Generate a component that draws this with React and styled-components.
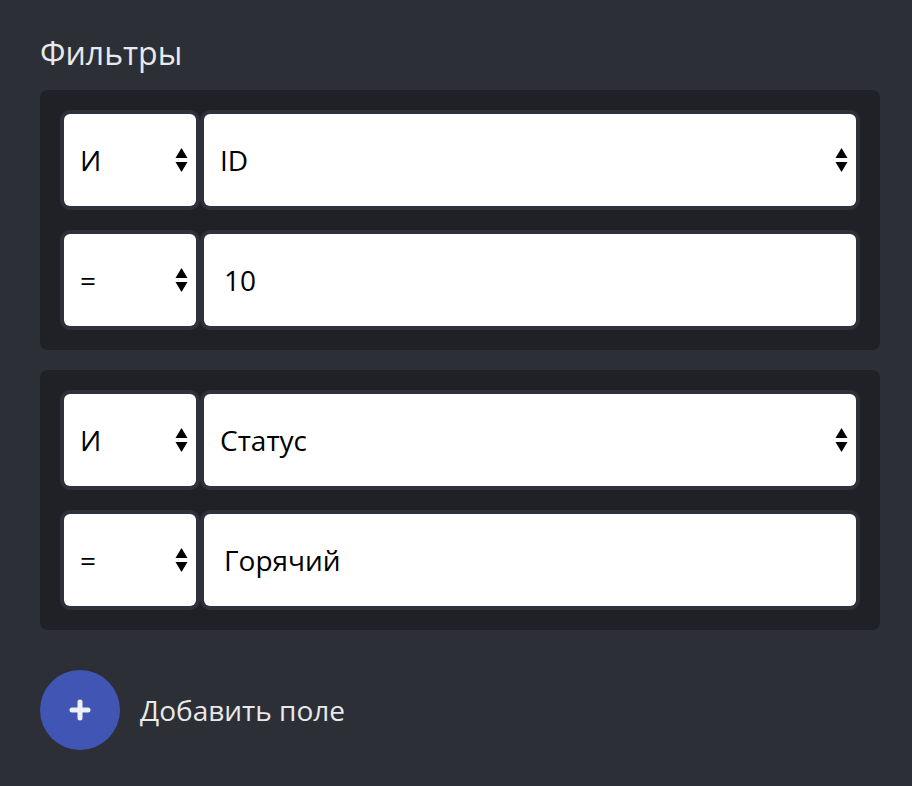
import React from "react";
import styled, { createGlobalStyle } from "styled-components";

const Global = createGlobalStyle`
  html, body { margin: 0; padding: 0; background: #2c2f36; }
  body { font-family: "Open Sans", "Noto Sans", sans-serif; }
  * { box-sizing: border-box; }
`;

const Page = styled.div`
  min-height: 786px;
  background: #2c2f36;
  padding: 31px 32px 0 40px;
  display: flex;
  flex-direction: column;
`;

const Title = styled.h2`
  margin: 0 0 15px 0;
  font-size: 32px;
  font-weight: 400;
  line-height: 44px;
  color: #e8e9eb;
`;

const Groups = styled.div`
  display: flex;
  flex-direction: column;
  gap: 20px;
`;

const Panel = styled.div`
  background: #202126;
  border-radius: 8px;
  padding: 20px;
  display: flex;
  flex-direction: column;
  gap: 20px;
`;

const Row = styled.div`
  display: grid;
  grid-template-columns: 140px 1fr;
  height: 100px;
`;

const Field = styled.div`
  position: relative;
  border: 4px solid #2e3139;
  border-radius: 10px;
  background: #2e3139;
  display: flex;
`;

const Inner = styled.div`
  flex: 1;
  background: #ffffff;
  border-radius: 6px;
  display: flex;
  align-items: center;
  padding-left: ${(p) => (p.$input ? "20px" : "16px")};
  font-size: 28px;
  color: #000;
`;

const Arrows = styled.svg`
  position: absolute;
  right: 8px;
  top: 50%;
  transform: translateY(-50%);
`;

const SelectArrows = () => (
  <Arrows width="13" height="26" viewBox="0 0 13 26">
    <polygon points="6.5,1 12.5,11 0.5,11" fill="#000" />
    <polygon points="0.5,15 12.5,15 6.5,25" fill="#000" />
  </Arrows>
);

const Select = ({ children }) => (
  <Field>
    <Inner>{children}</Inner>
    <SelectArrows />
  </Field>
);

const Input = ({ children }) => (
  <Field>
    <Inner $input>{children}</Inner>
  </Field>
);

const AddRow = styled.div`
  display: flex;
  align-items: center;
  gap: 20px;
  margin-top: 40px;
`;

const Circle = styled.button`
  width: 80px;
  height: 80px;
  border-radius: 50%;
  border: none;
  background: #4155b5;
  display: flex;
  align-items: center;
  justify-content: center;
  padding: 0;
`;

const AddLabel = styled.span`
  font-size: 28px;
  color: #e8e9eb;
`;

const groups = [
  { logic: "И", field: "ID", op: "=", value: "10" },
  { logic: "И", field: "Статус", op: "=", value: "Горячий" },
];

export default function App() {
  return (
    <>
      <Global />
      <Page>
        <Title>Фильтры</Title>
        <Groups>
          {groups.map((g, i) => (
            <Panel key={i}>
              <Row>
                <Select>{g.logic}</Select>
                <Select>{g.field}</Select>
              </Row>
              <Row>
                <Select>{g.op}</Select>
                <Input>{g.value}</Input>
              </Row>
            </Panel>
          ))}
        </Groups>
        <AddRow>
          <Circle>
            <svg width="22" height="22" viewBox="0 0 22 22">
              <path d="M11 3v16M3 11h16" stroke="#eef0f5" strokeWidth="5" strokeLinecap="round" />
            </svg>
          </Circle>
          <AddLabel>Добавить поле</AddLabel>
        </AddRow>
      </Page>
    </>
  );
}
